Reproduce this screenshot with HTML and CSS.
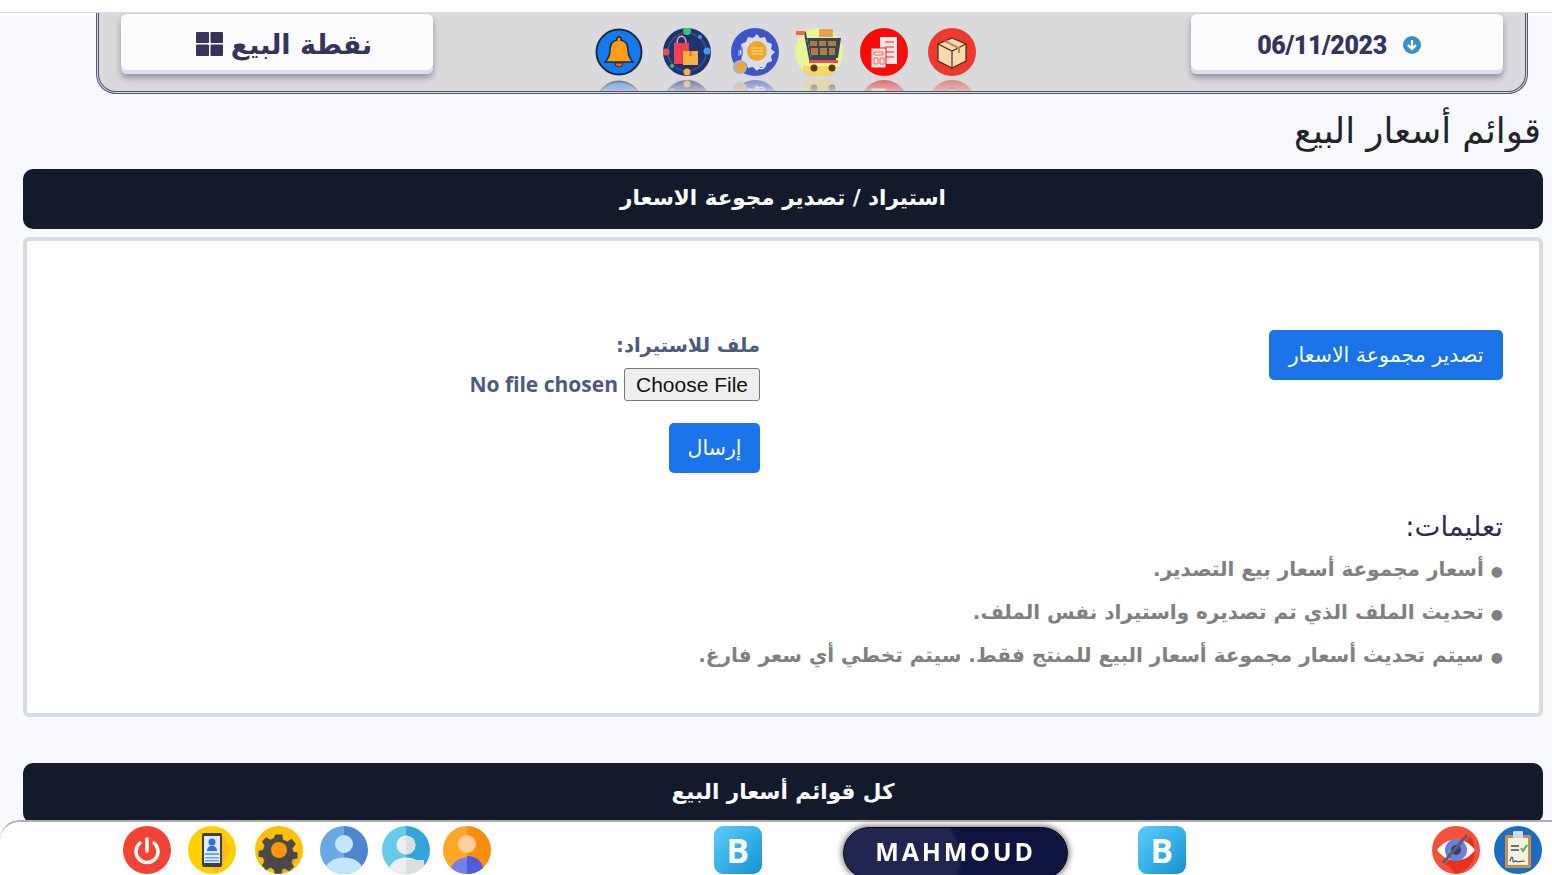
FILE: index.html
```html
<!DOCTYPE html>
<html lang="ar" dir="rtl">
  <head>
    <meta charset="UTF-8" />
    <meta name="viewport" content="width=device-width, initial-scale=1.0" />
    <title>قوائم أسعار البيع</title>
    <link rel="stylesheet" href="styles.css">
  </head>
  <body>
    <div class="top-strip"></div>
    <header class="topbar">
      <div class="top-box pos-box">
        <svg class="grid-icon" viewBox="0 0 27 24"><rect width="13" height="11" rx="1"/><rect x="14.500" width="12.500" height="11" rx="1"/><rect y="12.500" width="13" height="11.500" rx="1"/><rect x="14.500" y="12.500" width="12.500" height="11.500" rx="1"/></svg>
        <span>نقطة البيع</span>
      </div>
      <nav class="top-icons">
        <svg class="top-icon" viewBox="0 0 48 48"><circle cx="24" cy="24" r="22.500" fill="#1479ee" stroke="#1d2a3c" stroke-width="2"/><path d="M24 9a2 2 0 0 1 2 3c5 1 7 5 7 10 0 6 2 9 5 12H10c3-3 5-6 5-12 0-5 2-9 7-10a2 2 0 0 1 2-3z" fill="#ff9d1b" stroke="#1d2a3c" stroke-width="1.500"/><path d="M20 35h8a4 4 0 0 1-8 0z" fill="#f26a1b" stroke="#1d2a3c"/></svg>
        <svg class="top-icon" viewBox="0 0 48 48"><circle cx="24" cy="24" r="24" fill="#1c3472"/><circle cx="24" cy="24" r="19" fill="none" stroke="#44507f" stroke-width="1.500"/><path d="M11 15h15v21H11z" fill="#ee3f55"/><path d="M14 15c0-9 9-9 9 0" fill="none" stroke="#f6a6a6" stroke-width="1.500"/><path d="M20 23h15v14H20z" fill="#fbb040"/><path d="M26 23h3v5h-3z" fill="#e08a20"/><circle cx="24" cy="3" r="4" fill="#3ec36b"/><circle cx="3" cy="24" r="3.500" fill="#ea4a5a"/><circle cx="44" cy="23" r="3.500" fill="#4a9bf0"/><circle cx="24" cy="44" r="3.500" fill="#f7b33c"/><circle cx="9" cy="38" r="2" fill="#3ec36b"/><circle cx="37" cy="9" r="2" fill="#4a9bf0"/></svg>
        <svg class="top-icon" viewBox="0 0 48 48"><circle cx="24" cy="24" r="24" fill="#3e55c9"/><path d="M26 6l3 4 5-1 2 5 5 2-1 5 4 3-4 4 1 5-5 2-2 5-5-1-3 4-4-4-5 1-2-5-5-2 1-5-4-4 4-3-1-5 5-2 2-5 5 1z" fill="#d9deef"/><circle cx="26" cy="23" r="10" fill="#f5a623"/><path d="M20 20h12M20 23h12M20 26h12" stroke="#fbe0ad" stroke-width="1"/><circle cx="9" cy="39" r="7" fill="#aab1c4"/><circle cx="10" cy="39" r="4.500" fill="#f5a623"/><path d="M8 22v6M11 19v9" stroke="#7f8fe0" stroke-width="2"/><path d="M25 41c3-2 5 1 8-1" fill="none" stroke="#fff" stroke-width="1.200"/></svg>
        <svg class="top-icon cart-icon" viewBox="0 0 48 48"><circle cx="24" cy="24" r="24" fill="#e9f59b"/><path d="M8 38h32v6a24 24 0 0 1-32 0z" fill="#f6c945" opacity=".6"/><path d="M2 5h8l5 26h26" fill="none" stroke="#37475a" stroke-width="2"/><path d="M1 3h9v4H1z" fill="#f26a3b"/><path d="M24 1h14v8H24z" fill="#e5a253"/><path d="M12 10h34l-3 20H16z" fill="#37475a"/><path d="M15 13h7v5h-7zM24 13h7v5h-7zM33 13h8v5h-8zM16 20h7v7h-7zM25 20h7v7h-7zM34 20h6v7h-6z" fill="#b5793e"/><path d="M14 32h29v3H14z" fill="#ef4f3a"/><circle cx="19" cy="40" r="3.500" fill="#5b3a1d"/><circle cx="37" cy="40" r="3.500" fill="#5b3a1d"/></svg>
        <svg class="top-icon" viewBox="0 0 48 48"><circle cx="24" cy="24" r="24" fill="#f90b0b"/><path d="M20 9h17v27H20z" fill="#ffe9e6"/><path d="M25 14h9M25 19h9M25 24h9M25 29h9" stroke="#f4615c" stroke-width="1.500"/><path d="M11 20h15v20H11z" fill="#ffe9e6" stroke="#f90b0b"/><path d="M14 24h9v3h-9zM14 30h4v6h-4zM20 30h4v6h-4z" fill="none" stroke="#f4615c"/></svg>
        <svg class="top-icon" viewBox="0 0 48 48"><circle cx="24" cy="24" r="24" fill="#ee3a2e"/><path d="M24 10l14 6v17l-14 7-14-7V16z" fill="#fbd9ae" stroke="#4a2d20" stroke-width="1.200"/><path d="M10 16l14 7 14-7M24 23v17" fill="none" stroke="#4a2d20" stroke-width="1.200"/><path d="M17 13l14 7v5" fill="none" stroke="#b98a5c" stroke-width="2"/></svg>
      </nav>
      <div class="top-box date-box">
        <span>06/11/2023</span>
        <svg class="date-icon" viewBox="0 0 18 18"><circle cx="9" cy="9" r="9" fill="#3f8fc2"/><path d="M9 4v9M5 9l4 4 4-4" fill="none" stroke="#fff" stroke-width="2.200"/></svg>
      </div>
    </header>

    <main class="main-area">
      <h1>قوائم أسعار البيع</h1>
      <h2 class="section-head">استيراد / تصدير مجوعة الاسعار</h2>
      <section class="card">
        <div class="card-row">
          <div class="export-col">
            <a href="#" class="btn">تصدير مجموعة الاسعار</a>
          </div>
          <form class="import-form">
            <label for="importFile">ملف للاستيراد:</label>
            <input type="file" id="importFile">
            <button type="button" class="btn">إرسال</button>
          </form>
        </div>
        <h3>تعليمات:</h3>
        <p class="note"><span class="bullet">●</span>أسعار مجموعة أسعار بيع التصدير.</p>
        <p class="note"><span class="bullet">●</span>تحديث الملف الذي تم تصديره واستيراد نفس الملف.</p>
        <p class="note"><span class="bullet">●</span>سيتم تحديث أسعار مجموعة أسعار البيع للمنتج فقط. سيتم تخطي أي سعر فارغ.</p>
      </section>
      <h2 class="section-head all-lists">كل قوائم أسعار البيع</h2>
    </main>

    <footer class="bottombar">
      <div class="bar-group bar-left">
        <svg class="bar-icon" viewBox="0 0 48 48"><circle cx="24" cy="24" r="24" fill="#f44336"/><path d="M24 13v12" stroke="#fff" stroke-width="3.500" stroke-linecap="round"/><path d="M17 17a11 11 0 1 0 14 0" fill="none" stroke="#fff" stroke-width="3.500" stroke-linecap="round"/></svg>
        <svg class="bar-icon" viewBox="0 0 48 48"><circle cx="24" cy="24" r="24" fill="#ffd000"/><path d="M35 9a24 24 0 0 1 0 30L28 48 24 40z" fill="#ffb81f"/><rect x="14" y="7" width="20" height="34" rx="2" fill="#3c3f4a"/><rect x="16" y="10" width="16" height="27" fill="#e3ebf7"/><circle cx="24" cy="16" r="3.500" fill="#2f6fe0"/><path d="M19 25c0-7 10-7 10 0z" fill="#2f6fe0"/><path d="M17 27h14v2H17zM17 31h14v1.500H17zM17 34h14v1.500H17z" fill="#6ea3f2"/></svg>
        <svg class="bar-icon" viewBox="0 0 48 48"><circle cx="24" cy="24" r="24" fill="#ffc107"/><path d="M42 30a24 24 0 0 1-16 18L12 34z" fill="#f5a11a"/><path d="M20 6h8l1 6 5 2 5-3 5 6-4 5 1 4 5 1v7l-6 1-1 4 3 5-6 5-5-3-3 1-1 5h-8l-1-5-4-2-5 3-5-6 3-5-2-4-5-1v-7l5-1 2-5-3-5 5-5 5 3 4-2z" transform="translate(3.500 3.500) scale(.85)" fill="#4a4a4a"/><circle cx="24" cy="24" r="8" fill="#ff9800"/></svg>
        <svg class="bar-icon" viewBox="0 0 48 48"><defs><clipPath id="disc"><circle cx="24" cy="24" r="24"/></clipPath></defs><g clip-path="url(#disc)"><path d="M0 0h24v48H0z" fill="#6aa8e2"/><path d="M24 0h24v48H24z" fill="#4f84cf"/><path d="M4 48c0-22 40-22 40 0z" fill="#c2e6fa"/><circle cx="24" cy="18" r="9" fill="#c2e6fa"/></g></svg>
        <svg class="bar-icon" viewBox="0 0 48 48"><g clip-path="url(#disc)"><path d="M0 0h24v48H0z" fill="#66cbea"/><path d="M24 0h24v48H24z" fill="#36a4dc"/><path d="M6 48c0-22 36-22 36 0z" fill="#eceef2"/><path d="M24 34h18v14H24z" fill="#dcdde1"/><circle cx="24" cy="19" r="9.500" fill="#eceef2"/><path d="M24 9.500a9.500 9.500 0 0 1 0 19z" fill="#dcdde1"/></g></svg>
        <svg class="bar-icon" viewBox="0 0 48 48"><g clip-path="url(#disc)"><path d="M0 0h24v48H0z" fill="#ffa726"/><path d="M24 0h24v48H24z" fill="#fb8c0e"/><path d="M7 48c0-22 34-22 34 0z" fill="#7380ea"/><path d="M24 30c10 0 17 6 17 18H24z" fill="#4f5be0"/><circle cx="24" cy="18" r="9" fill="#fdd199"/></g></svg>
      </div>
      <div class="bar-group bar-middle">
        <span class="b-logo">B</span>
        <div class="user-pill"><span>MAHMOUD</span></div>
        <span class="b-logo">B</span>
      </div>
      <div class="bar-group bar-right">
        <svg class="bar-icon" viewBox="0 0 48 48"><circle cx="24" cy="24" r="24" fill="#f4523b"/><path d="M38 10A24 24 0 0 1 24 48L14 38z" fill="#e8301f"/><path d="M5 24c10-14 28-14 38 0-10 14-28 14-38 0z" fill="#fff"/><circle cx="24" cy="24" r="11" fill="#6b7fe3"/><circle cx="24" cy="24" r="5" fill="#3c4254"/><path d="M35 9L11 37" stroke="#5a5f6c" stroke-width="3"/></svg>
        <svg class="bar-icon" viewBox="0 0 48 48"><circle cx="24" cy="24" r="24" fill="#1b6dc1"/><rect x="11" y="9" width="26" height="33" rx="1.500" fill="#c98f45"/><rect x="14" y="12" width="20" height="27" fill="#f6f1e2"/><rect x="19" y="5" width="10" height="7" rx="1" fill="#cfd8e3"/><path d="M17 20h8M17 24h8" stroke="#5f7688" stroke-width="2"/><path d="M27 22l2 3 4-6" fill="none" stroke="#3dbb6a" stroke-width="2"/><path d="M16 35c2-7 3-3 3 0s3-2 3 0 6 0 9 0" fill="none" stroke="#4a5a68" stroke-width="1.200"/></svg>
      </div>
    </footer>
  </body>
</html>
```

FILE: styles.css
```css
html, body {
  height: 100%;
}
body {
  font-family: "DejaVu Sans", sans-serif;
  margin: 0;
  background-color: #f8f9ff;
  color: #212529;
  overflow: hidden;
}
.top-strip {
  height: 12px;
  background-color: #fff;
  border-bottom: 1px solid #dcdcdc;
}
.topbar {
  direction: ltr;
  display: flex;
  justify-content: space-between;
  box-sizing: border-box;
  height: 81px;
  margin: 0 24px 0 96px;
  padding: 1px 22px 0 22px;
  background-color: #dadadd;
  border: 3px double #4c5678;
  border-top: none;
  border-radius: 0 0 20px 20px;
  overflow: hidden;
}
.top-box {
  display: flex;
  justify-content: center;
  align-items: center;
  box-sizing: border-box;
  width: 312px;
  height: 60px;
  gap: 8px;
  color: #33355a;
  background-color: #fcfcff;
  border-radius: 6px;
  box-shadow: inset 0 -4px 0 #dcdcec, 0 4px 6px rgba(60, 60, 90, 0.45);
  font-weight: bold;
}
.pos-box {
  direction: ltr;
  font-size: 27px;
  padding-left: 14px;
}
.grid-icon {
  width: 27px;
  height: 24px;
  fill: #33355a;
}
.date-box {
  font-family: Roboto, sans-serif;
  font-size: 25px;
  font-weight: 900;
  letter-spacing: -0.4px;
  gap: 16px;
  padding: 2px 16px 0 0;
}
.date-icon {
  width: 18px;
  height: 18px;
}
.top-icons {
  display: flex;
  gap: 20px;
  padding-top: 14px;
  margin-right: 54px;
}
.top-icon {
  width: 48px;
  height: 48px;
  -webkit-box-reflect: below 4px linear-gradient(transparent 65%, rgba(255, 255, 255, 0.55));
}
.cart-icon {
  margin: 0 -3px 0 -4px;
}
.main-area {
  padding: 0 9px 0 23px;
}
h1 {
  margin: 14px 2px 16px 0;
  font-size: 35.500px;
  font-weight: normal;
  line-height: 45px;
  color: #212529;
}
.section-head {
  margin: 0;
  height: 60px;
  line-height: 58px;
  text-align: center;
  background-color: #131a2c;
  color: #fff;
  font-size: 21.500px;
  border-radius: 10px;
}
.card {
  box-sizing: border-box;
  height: 480px;
  margin-top: 8px;
  padding: 89px 36px 0;
  background-color: #fff;
  border: 4px solid #d6dbe6;
  border-radius: 6px;
}
.card-row {
  display: grid;
  grid-template-columns: 743px 1fr;
}
.btn {
  display: inline-block;
  padding: 0 18.500px;
  height: 50px;
  line-height: 50px;
  background-color: #1a73e8;
  color: #fff;
  font-family: "DejaVu Sans", sans-serif;
  font-size: 20.500px;
  border: none;
  border-radius: 5px;
  text-decoration: none;
}
.export-col .btn {
  padding: 0 19.500px;
}
.import-form {
  display: flex;
  flex-direction: column;
  align-items: flex-start;
}
.import-form label {
  height: 38px;
  line-height: 32px;
  font-size: 19.500px;
  font-weight: bold;
  color: #4d5a7c;
}
.import-form input {
  width: 300px;
  margin-bottom: 22px;
  font-family: "Open Sans", sans-serif;
  font-size: 21px;
  font-weight: bold;
  color: #4d5a7c;
}
.import-form input::file-selector-button {
  width: 136px;
  height: 33px;
  margin: 0 0 0 6px;
  font-family: "Liberation Sans", sans-serif;
  font-size: 21px;
  color: #111;
  background-color: #efefef;
  border: 1px solid #767676;
  border-radius: 3px;
}
h3 {
  margin: 37px 0 5px;
  font-size: 27.500px;
  font-weight: normal;
  line-height: 32px;
  color: #2e2b55;
}
.note {
  margin: 0;
  height: 43px;
  line-height: 45px;
  font-size: 20px;
  font-weight: bold;
  color: #808080;
}
.bullet {
  margin-left: 7px;
  font-size: 14px;
}
.all-lists {
  margin-top: 46px;
}
.bottombar {
  position: fixed;
  left: 0;
  right: 0;
  bottom: 0;
  direction: ltr;
  display: flex;
  box-sizing: border-box;
  height: 55px;
  padding: 4px 10px 0 123px;
  background-color: #fff;
  border-top: 2px solid #b0b0b0;
  border-top-left-radius: 20px;
}
.bar-group {
  display: flex;
}
.bar-left {
  gap: 13px;
}
.bar-left .bar-icon:nth-child(2),
.bar-left .bar-icon:nth-child(4) {
  margin-left: 4px;
}
.bar-left .bar-icon:nth-child(3) {
  margin-left: 6px;
}
.bar-left .bar-icon:nth-child(5) {
  margin-left: 1px;
}
.bar-middle {
  margin-left: 223px;
}
.bar-right {
  margin-left: auto;
  gap: 14px;
}
.bar-icon {
  width: 48px;
  height: 48px;
}
.b-logo {
  width: 48px;
  height: 48px;
  border-radius: 9px;
  background: linear-gradient(135deg, #5ccbf9 0%, #37b2ea 50%, #1590cb 100%);
  color: #fff;
  font-family: "Open Sans", sans-serif;
  font-size: 34px;
  font-weight: bold;
  line-height: 48px;
  text-align: center;
}
.user-pill {
  box-sizing: border-box;
  width: 225px;
  height: 52px;
  margin: 1px 70px 0 81px;
  background: radial-gradient(ellipse 120px 70px at 0 30px, #20264f 95%, #0f1340 100%);
  border: 1px solid #000;
  border-radius: 26px;
  box-shadow: 0 0 6px 1px rgba(0, 0, 0, 0.6);
  color: #fff;
  font-family: "Open Sans", sans-serif;
  font-size: 25px;
  font-weight: bold;
  letter-spacing: 2.800px;
  line-height: 46px;
  text-align: center;
}
```
